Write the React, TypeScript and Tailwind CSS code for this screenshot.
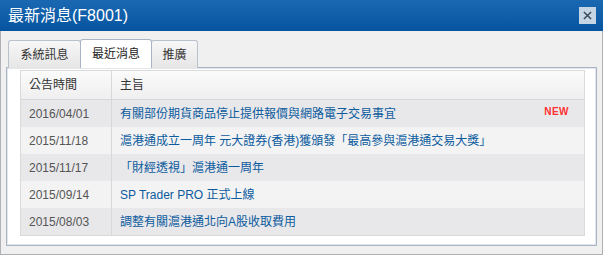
const rows = [
  { date: "2016/04/01", subject: "有關部份期貨商品停止提供報價與網路電子交易事宜", isNew: true },
  { date: "2015/11/18", subject: "滬港通成立一周年 元大證券(香港)獲頒發「最高參與滬港通交易大獎」" },
  { date: "2015/11/17", subject: "「財經透視」滬港通一周年" },
  { date: "2015/09/14", subject: "SP Trader PRO 正式上線" },
  { date: "2015/08/03", subject: "調整有關滬港通北向A股收取費用" },
];

const tabs = [
  { label: "系統訊息", w: "w-[73px]" },
  { label: "最近消息", w: "w-[72px]" },
  { label: "推廣", w: "w-[47px]" },
];

export default function App() {
  return (
    <div className="w-[603px] h-[257px] bg-white font-['Liberation_Sans','Noto_Sans_CJK_TC',sans-serif]">
      {/* title bar */}
      <div className="h-[31px] flex items-center justify-between pl-[8px] pr-[7px] bg-gradient-to-b from-[#1a68b2] to-[#0654a0]">
        <span className="text-[16px] text-white leading-none">最新消息(F8001)</span>
        <button
          type="button"
          className="w-[17px] h-[17px] flex items-center justify-center bg-[#c5d5e4]"
        >
          <svg viewBox="0 0 10 10" className="w-[9px] h-[9px]" stroke="#3b4754" strokeWidth="1.6">
            <path d="M1 1 L9 9 M9 1 L1 9" />
          </svg>
        </button>
      </div>

      <div className="h-[224px] border border-t-0 border-[#aeb2b7] bg-[#f0f0f0] px-[5px] pt-[8px]">
        {/* tabs */}
        <div className="flex h-[28px] pl-[2px]">
          {tabs.map((t, i) =>
            i === 1 ? (
              <div
                key={t.label}
                className={`${t.w} -ml-px relative z-10 h-[29px] flex items-center justify-center rounded-t-[3px] border border-b-0 border-[#a9b5c5] bg-white text-[12px] text-[#222]`}
              >
                {t.label}
              </div>
            ) : (
              <div
                key={t.label}
                className={`${t.w} ${i === 2 ? "-ml-px" : ""} h-[28px] mt-px flex items-center justify-center rounded-t-[3px] border border-b-0 border-[#b9c1cc] bg-gradient-to-b from-[#f7f7f7] to-[#e6e6e6] text-[12px] text-[#333]`}
              >
                {t.label}
              </div>
            )
          )}
        </div>

        {/* panel */}
        <div className="h-[179px] border border-[#a9b5c5] bg-white shadow-[inset_0_0_0_1px_#e3e7ec] pt-[2px] pl-[13px] pr-[11px]">
          <div className="border border-[#dadada] text-[12px]">
            <div className="flex h-[29px] bg-gradient-to-b from-[#fbfbfb] to-[#efefef] border-b border-[#d8d8d8] text-[#333]">
              <div className="w-[91px] flex items-center pl-[8px] border-r border-[#d8d8d8]">公告時間</div>
              <div className="flex-1 flex items-center pl-[8px]">主旨</div>
            </div>
            {rows.map((r, i) => (
              <div
                key={r.date}
                className={`flex h-[27px] ${i % 2 === 0 ? "bg-[#e8e8ea]" : "bg-[#f3f3f3]"}`}
              >
                <div className="w-[91px] flex items-center pl-[8px] border-r border-[#d8d8d8] text-[#555]">
                  {r.date}
                </div>
                <div className="flex-1 flex items-center pl-[8px] pr-[15px] text-[#0c5b9e]">
                  <span>{r.subject}</span>
                  {r.isNew && (
                    <span className="ml-auto text-[10px] font-bold text-[#ff3030] tracking-[0.5px] -mt-[4px]">
                      NEW
                    </span>
                  )}
                </div>
              </div>
            ))}
          </div>
        </div>
      </div>
    </div>
  );
}
